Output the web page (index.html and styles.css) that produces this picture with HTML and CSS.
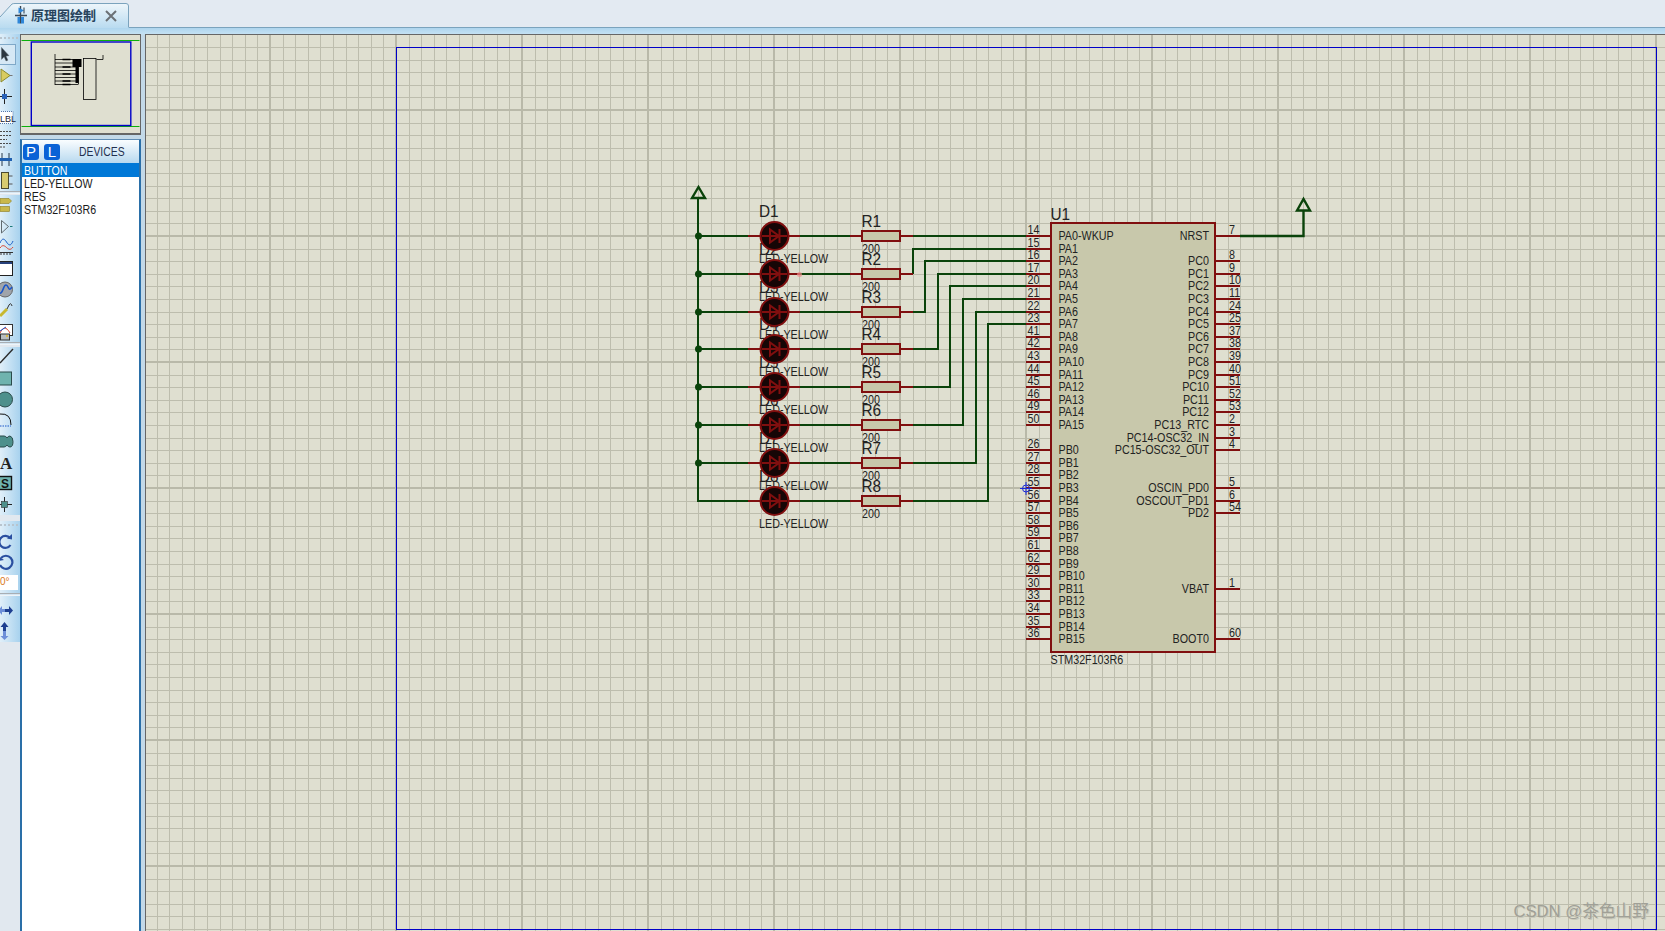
FILE: index.html
```html
<!DOCTYPE html>
<html lang="zh">
<head>
<meta charset="utf-8">
<title>原理图绘制</title>
<link rel="stylesheet" href="styles.css">
</head>
<body>
<header class="tabbar">
  <div class="tab">
    <svg class="tab-shape" viewBox="0 0 130 28" width="130" height="28">
      <defs><linearGradient id="tabg" x1="0" y1="0" x2="0" y2="1"><stop offset="0" stop-color="#eef6fb"/><stop offset="1" stop-color="#b9dbf0"/></linearGradient></defs>
      <path d="M0 17 L12 4 Q13 3.500 15 3.500 L126 3.500 Q128.500 3.500 128.500 6 L128.500 28 L0 28 Z" fill="url(#tabg)"/>
      <path d="M0 17 L12 4 Q13 3.500 15 3.500 L126 3.500 Q128.500 3.500 128.500 6 L128.500 27" fill="none" stroke="#7ba3bd"/>
    </svg>
    <svg class="tab-icon" viewBox="0 0 14 18" width="14" height="18">
      <path d="M6.500 0V17.500M1 9.500H13" stroke="#3a4652" stroke-width="1.400" fill="none"/>
      <path d="M4.500 1.500L10 4.500L4.500 7.500Z" fill="#2f86d8"/><path d="M10 1.500V7.500" stroke="#26384a"/>
      <rect x="3.500" y="11" width="2.500" height="6.500" fill="#2f86d8"/><rect x="7" y="11" width="3" height="6.500" fill="#2f86d8"/>
    </svg>
    <span class="tab-title">原理图绘制</span>
    <svg class="tab-close" viewBox="0 0 12 12" width="12" height="12"><path d="M1 1L11 11M11 1L1 11" stroke="#6b7075" stroke-width="2"/></svg>
  </div>
</header>

<main class="workspace">
  <nav class="toolbar">
    <div class="toolgroup">
      <div class="grip"></div>
      <svg class="tool active" viewBox="0 0 20 21"><path d="M2 1L2 17L5.500 13.500L8 19L10.500 18L8 12.500L12 12Z" fill="#2b3640" stroke="#55606a" stroke-width=".6"/></svg>
      <svg class="tool" viewBox="0 0 20 21"><path d="M1 4L1 17L10 10.500Z" fill="#d8cc60" stroke="#8a8a30"/><path d="M10 10.500H12.500" stroke="#777"/></svg>
      <svg class="tool" viewBox="0 0 20 21"><path d="M4.500 3V18M0 10.500H12" stroke="#222" stroke-width="1"/><rect x="2" y="8" width="5" height="5" fill="#2a62b8"/></svg>
      <svg class="tool" viewBox="0 0 20 21"><rect x="-3" y="4.500" width="16" height="12" fill="#fff" stroke="#5577aa" stroke-dasharray="1 1"/><text class="lbl" x="0" y="14.500">LBL</text></svg>
      <svg class="tool" viewBox="0 0 20 21"><path d="M0 3.500H11M0 7.500H11M0 11.500H7M0 15.500H11M0 19H6" stroke="#4a4a4a" stroke-width="1" stroke-dasharray="2 1"/></svg>
      <svg class="tool" viewBox="0 0 20 21"><path d="M2 4V17M9 4V17" stroke="#26384a" stroke-width="1"/><path d="M0 10.500H12" stroke="#2060b0" stroke-width="3"/></svg>
      <svg class="tool" viewBox="0 0 20 21"><rect x="1.500" y="2.500" width="7" height="16" fill="#d8cc70" stroke="#4a4a30"/><path d="M9 6H12.500M9 14H12.500" stroke="#555"/></svg>
    </div>
    <div class="sep"></div>
    <div class="toolgroup after-one">
      <svg class="tool" viewBox="0 0 20 21"><path d="M0 3.500H9L11.500 6L9 8.500H0Z" fill="#c9b84a" stroke="#8a7a20" stroke-width=".6"/><rect x="0" y="11.500" width="9.500" height="5" fill="#c9b84a" stroke="#8a7a20" stroke-width=".6"/></svg>
      <svg class="tool" viewBox="0 0 20 21"><path d="M1.500 4.500V17L8.500 10.500Z" fill="none" stroke="#606a70"/><path d="M10 10.500H12.500" stroke="#1a7a7a"/></svg>
      <svg class="tool" viewBox="0 0 20 21"><path d="M0 6C2 1 4 1 6.500 5S11 9 13 4" fill="none" stroke="#1a5fc8"/><path d="M0 11C2 8 4 8 6.500 10.500S11 13 13 10" fill="none" stroke="#d8402a"/><path d="M0 15.500H13M1 15.500V18M4 15.500V18M7 15.500V18M10 15.500V18" stroke="#333"/></svg>
      <svg class="tool" viewBox="0 0 20 21"><rect x="-2" y="3.500" width="14.500" height="14" fill="#fff" stroke="#222" stroke-width="1"/><rect x="-1" y="4" width="13" height="2" fill="#26407a"/></svg>
      <svg class="tool" viewBox="0 0 20 21"><circle cx="5" cy="10.500" r="7.500" fill="#a0a4aa" stroke="#666"/><path d="M-1 14C3 16 3 6 6 6S8 14 12 8" fill="none" stroke="#1a56c8" stroke-width="1.600"/></svg>
      <svg class="tool" viewBox="0 0 20 21"><path d="M0 16L7 9" stroke="#c8b830" stroke-width="3"/><path d="M7 9L9 5Q11 2 12 6" fill="none" stroke="#333"/></svg>
      <svg class="tool" viewBox="0 0 20 21"><rect x="-2" y="3.500" width="14.500" height="11" fill="#fff" stroke="#333"/><path d="M0 12C3 6 6 5 10 12" fill="none" stroke="#d8402a"/><path d="M0 10L6 6" stroke="#1a56c8"/><rect x="0.500" y="13" width="9" height="6" fill="#b8bcc0" stroke="#333"/><circle cx="7" cy="15" r="1" fill="#e8b820"/></svg>
    </div>
    <div class="sep"></div>
    <div class="toolgroup after-two">
      <svg class="tool" viewBox="0 0 20 21"><path d="M0 16L13 2" stroke="#2a2a2a" stroke-width="1.400"/></svg>
      <svg class="tool" viewBox="0 0 20 21"><rect x="-2" y="4" width="13.500" height="13" fill="#6fb3ae" stroke="#2a4a4a"/></svg>
      <svg class="tool" viewBox="0 0 20 21"><circle cx="5" cy="10.500" r="7.500" fill="#4e908c" stroke="#2a4a4a"/></svg>
      <svg class="tool" viewBox="0 0 20 21"><path d="M0 4Q11 3 11 15" fill="none" stroke="#111"/><path d="M0 16H11" stroke="#1a56c8" stroke-dasharray="1.500 1"/></svg>
      <svg class="tool" viewBox="0 0 20 21"><path d="M-1 5H4Q6 5 7 7Q8 5 10 5Q13 6 13 10.500Q13 16 10 16Q8 16 7 14Q6 16 4 16H-1Z" fill="#4e908c" stroke="#2a4a4a"/></svg>
      <svg class="tool" viewBox="0 0 20 21"><text class="big-a" x="0" y="17">A</text></svg>
      <svg class="tool" viewBox="0 0 20 21"><rect x="-2" y="3.500" width="13.500" height="13" fill="#6fb3ae" stroke="#111" stroke-width="1.400"/><text class="big-s" x="1" y="15">S</text></svg>
      <svg class="tool" viewBox="0 0 20 21"><path d="M4.500 3V18M0 10.500H12" stroke="#222"/><rect x="1.500" y="7.500" width="6" height="6" fill="#4e908c" stroke="#333" stroke-width=".6"/></svg>
    </div>
    <div class="toolgap"></div>
    <div class="toolgroup">
      <div class="grip"></div>
      <svg class="tool" viewBox="0 0 20 21"><path d="M10 7A6 6 0 1 0 10.500 14" fill="none" stroke="#2a4fa0" stroke-width="2.200"/><path d="M7 7.500L12 8.500L12 3Z" fill="#2a4fa0"/></svg>
      <svg class="tool" viewBox="0 0 20 21"><path d="M1 6A6.500 6.500 0 1 1 0 13" fill="none" stroke="#2a4fa0" stroke-width="2.200"/><path d="M-2 4L-1 9L4 8Z" fill="#2a4fa0"/></svg>
      <div class="angle"><span class="angle-val">0°</span></div>
      <div class="sep"></div>
      <svg class="tool flip-first" viewBox="0 0 20 21"><path d="M5 9H9V6L13 10.500L9 15V12H5Z" fill="#1e3f90"/><path d="M5 9H2V6L-2 10.500L2 15V12H5Z" fill="#6d8fd8"/></svg>
      <svg class="tool" viewBox="0 0 20 21"><path d="M3 10V6H0.500L4.500 1L8.500 6H6V10Z" fill="#1e3f90"/><path d="M3 10V15H0.500L4.500 19L8.500 15H6V10Z" fill="#6d8fd8"/></svg>
    </div>
  </nav>

  <aside class="sidebar">
    <section class="overview">
      <svg class="overview-svg" viewBox="21 36 118 98">
        <path class="ov-green" d="M21 41.500H139M21 127.500H139"/>
        <rect class="ov-sheet" x="30.800" y="43" width="99.500" height="83.500"/>
        <path class="ov-ink" d="M54.500 55V86M54.500 60.500H78M54.500 64H78M54.500 68H76M54.500 71.500H76M54.500 75H78M54.500 78.500H78M54.500 82H78M54.500 85.500H78M78 60V85"/>
        <path class="ov-thick" d="M62 60.500H70M62 68H70M62 75H70M62 82H70M62 85.500H70"/>
        <path class="ov-blob" d="M72 60H81V68H78V84H75V68H72Z"/>
        <rect class="ov-ink" x="83" y="59.500" width="12.500" height="41"/>
        <path class="ov-ink" d="M96 60.500H102.500V56"/>
      </svg>
    </section>
    <section class="devices">
      <div class="devices-head">
        <span class="pl-btn">P</span>
        <span class="pl-btn">L</span>
        <span class="devices-title">DEVICES</span>
      </div>
      <ul class="device-list">
        <li class="device selected"><span>BUTTON</span></li>
        <li class="device"><span>LED-YELLOW</span></li>
        <li class="device"><span>RES</span></li>
        <li class="device"><span>STM32F103R6</span></li>
      </ul>
    </section>
  </aside>

  <section class="canvas">
    <svg id="sheet" class="schematic" viewBox="145 34 1520 897" width="1520" height="897"></svg>
    <div class="watermark">CSDN @茶色山野</div>
  </section>
</main>
<script src="script.js"></script>
</body>
</html>
```

FILE: styles.css
```css
* { box-sizing: border-box; }
html, body { margin: 0; height: 100%; overflow: hidden; }
body {
  display: flex;
  flex-direction: column;
  width: 1665px;
  height: 931px;
  background: #e1e8ef;
  font-family: "Liberation Sans", Arial, sans-serif;
}

/* Tab strip */
.tabbar {
  height: 28px;
  flex: none;
  background: #e3eaf2;
  border-bottom: 1px solid #7ba3bd;
  display: flex;
}
.tab { position: relative; width: 130px; height: 28px; }
.tab-shape { position: absolute; left: 0; top: 0; }
.tab-icon { position: absolute; left: 14px; top: 6px; }
.tab-title {
  position: absolute;
  left: 31px;
  top: 6px;
  font: 700 13px/17px "Noto Sans CJK SC", sans-serif;
  color: #27435c;
}
.tab-close { position: absolute; left: 105px; top: 10px; }

/* Main area */
.workspace {
  flex: 1;
  min-height: 0;
  display: flex;
  padding-top: 6px;
  background: linear-gradient(#aed5ee 0, #c4e1f3 6px, #c3d9e8 7px);
}

/* Left tool strip */
.toolbar {
  width: 20px;
  flex: none;
  display: flex;
  flex-direction: column;
  background: #e1e8ef;
  overflow: hidden;
}
.toolgroup {
  display: flex;
  flex-direction: column;
  flex: none;
  background: linear-gradient(90deg, #e0eff9, #a8d2ee);
}
.after-one { margin-top: 1px; }
.after-two { margin-top: 2px; }
.grip {
  height: 10px;
  margin-right: 2px;
  background: repeating-linear-gradient(90deg, #b8c4ce 0 2px, transparent 2px 4px) 0 3px / 100% 2px no-repeat;
}
.tool { display: block; width: 20px; height: 21px; flex: none; overflow: hidden; }
.tool.active { background: #d6e8f5; border: 1px solid #7fa8c8; border-left: 0; width: 16px; }
.sep {
  height: 3px;
  flex: none;
  border-top: 1px solid #a8aeb4;
  border-bottom: 1px solid #eef4f9;
  background: #d5e6f2;
}
.toolgap { height: 6px; flex: none; }
.angle {
  position: relative;
  height: 15px;
  width: 18px;
  margin: 2px 0 3px;
  flex: none;
  overflow: hidden;
  background: #fff;
}
.angle-val { position: absolute; left: 0; top: 0; font-size: 10px; line-height: 14px; color: #d87a20; }
.flip-first { margin-top: 4px; }
.lbl { font: 9px "Liberation Sans", sans-serif; fill: #223; }
.big-a { font: 700 17px "Liberation Serif", serif; fill: #222; }
.big-s { font: 700 12px "Liberation Sans", sans-serif; fill: #111; }

/* Side panel */
.sidebar {
  width: 121px;
  flex: none;
  display: flex;
  flex-direction: column;
  gap: 4px;
}
.overview {
  height: 101px;
  flex: none;
  border: 1px solid #666;
  border-bottom-width: 2px;
  background: #dfdfd0;
}
.overview-svg { display: block; width: 119px; height: 98px; }
.ov-green { stroke: #0ab00a; stroke-width: 1; fill: none; }
.ov-sheet { stroke: #0000c8; stroke-width: 1.400; fill: none; }
.ov-ink { stroke: #000; stroke-width: .8; fill: none; }
.ov-thick { stroke: #000; stroke-width: 1.600; fill: none; }
.ov-blob { fill: #000; }
.devices {
  flex: 1;
  display: flex;
  flex-direction: column;
  border: 2px solid #2a6fa8;
  border-top: 1px solid #5f8db5;
  border-bottom: 0;
  background: #fff;
}
.devices-head {
  height: 23px;
  flex: none;
  display: flex;
  align-items: center;
  gap: 5px;
  padding-left: 1px;
  background: linear-gradient(#fafdff, #b8d9ef);
}
.pl-btn {
  width: 16px;
  height: 16px;
  border-radius: 3px;
  background: #0a62d6;
  color: #fff;
  font-size: 15px;
  line-height: 16px;
  text-align: center;
}
.devices-title {
  margin-left: 14px;
  font-size: 12.500px;
  color: #1f3050;
  transform: scaleX(.83);
  transform-origin: left center;
}
.device-list { list-style: none; margin: 0; padding: 0; }
.device {
  height: 13px;
  padding-left: 2px;
  font-size: 12.500px;
  line-height: 13px;
  color: #1a1a1a;
  white-space: nowrap;
}
.device span {
  display: inline-block;
  position: relative;
  top: 1px;
  transform: scaleX(.85);
  transform-origin: left center;
}
.device.selected { height: 14px; line-height: 14px; background: #0078d7; color: #fff; }

/* Drawing canvas */
.canvas {
  position: relative;
  flex: 1;
  min-width: 0;
  margin-left: 4px;
  background: #dfdfd0;
  overflow: hidden;
}
.schematic { display: block; }
.grid-minor { stroke: #bdbdad; stroke-width: 1; }
.grid-major { stroke: #b9b9a9; stroke-width: 2; }
.frame { fill: none; stroke: #666; stroke-width: 2; }
.sheet-edge { fill: none; stroke: #0000c8; stroke-width: 1; }
.wire { fill: none; stroke: #0a430a; stroke-width: 2; }
.dot { fill: #0a430a; }
.power { fill: none; stroke: #0a430a; stroke-width: 2.400; }
.pin { stroke: #800f0f; stroke-width: 2; fill: none; }
.body { fill: #c8c8ab; stroke: #800f0f; stroke-width: 2; }
.led { fill: #160606; stroke: #800f0f; stroke-width: 2; }
.diode { fill: none; stroke: #800f0f; stroke-width: 2; }
.probe-dot { fill: #f08a8a; opacity: .7; }
.cursor { fill: none; stroke: #1a2ad8; stroke-width: 1; }
.label { font-family: "Liberation Sans", Arial, sans-serif; font-size: 12.500px; fill: #222; }
.label.ref { font-size: 16.500px; }
.watermark {
  position: absolute;
  right: 16px;
  bottom: 9px;
  font: 16.700px/20px "Liberation Sans", "Noto Sans CJK SC", sans-serif;
  color: #a0a097;
  text-shadow: 1px 1px 0 #c9c9ba;
  white-space: nowrap;
}
```

FILE: script.js
```javascript
(function () {
  var out = [];
  var X0 = 145, Y0 = 34, X1 = 1665, Y1 = 931;
  var STEP = 12.6;

  function line(cls, x1, y1, x2, y2) {
    out.push('<line class="' + cls + '" x1="' + x1 + '" y1="' + y1 + '" x2="' + x2 + '" y2="' + y2 + '"/>');
  }
  function path(cls, d) { out.push('<path class="' + cls + '" d="' + d + '"/>'); }
  function label(x, y, s, opt) {
    opt = opt || {};
    var sx = opt.ref ? 0.93 : 0.86;
    out.push('<text class="label' + (opt.ref ? ' ref' : '') + '" transform="translate(' + x + ' ' + y + ') scale(' + sx + ' 1)"' +
      (opt.end ? ' text-anchor="end"' : '') + '>' + s + '</text>');
  }

  // Grid: minor every 12.6px, major every tenth line
  var k, v, minor = [], major = [];
  for (k = -10; k <= 120; k++) {
    v = 270 + STEP * k;
    if (v < X0 || v > X1) continue;
    if (k % 10 === 0) major.push(['x', Math.round(v)]); else minor.push(['x', Math.round(v) + 0.5]);
  }
  for (k = -10; k <= 70; k++) {
    v = 110 + STEP * k;
    if (v < Y0 || v > Y1) continue;
    if (k % 10 === 0) major.push(['y', Math.round(v)]); else minor.push(['y', Math.round(v) + 0.5]);
  }
  minor.forEach(function (m) {
    if (m[0] === 'x') line('grid-minor', m[1], Y0, m[1], Y1); else line('grid-minor', X0, m[1], X1, m[1]);
  });
  major.forEach(function (m) {
    if (m[0] === 'x') line('grid-major', m[1], Y0, m[1], Y1); else line('grid-major', X0, m[1], X1, m[1]);
  });

  // Sheet edge and canvas frame
  out.push('<rect class="sheet-edge" x="396.500" y="47.500" width="1260" height="882"/>');
  path('frame', 'M145 931V34H1665');

  // LED / resistor rows
  var rows = [236, 274, 312, 349, 387, 425, 463, 501];
  var exits = [
    [1026, 236], [913, 249], [925, 261], [938, 274],
    [950, 286], [963, 299], [976, 312], [988, 324]
  ];

  // Labels first: the LED bodies cover them
  rows.forEach(function (y, i) {
    label(759, y - 19.5, 'D' + (i + 1), { ref: true });
    label(759, y + 26.5, 'LED-YELLOW');
  });

  // Wires
  path('wire', 'M698 198V501H748');
  rows.forEach(function (y, i) {
    if (i < 7) line('wire', 698, y, 748, y);
    line('wire', 800, y, 850, y);
    var e = exits[i];
    if (i === 0) path('wire', 'M913 ' + y + 'H1026');
    else path('wire', 'M913 ' + y + 'H' + e[0] + 'V' + e[1] + 'H1026');
    if (i < 7) out.push('<circle class="dot" cx="698.500" cy="' + y + '" r="3.500"/>');
  });

  // Power terminals
  path('power', 'M692 198L698.500 187L705 198Z');
  path('power', 'M1297 210.500L1303.500 199L1310 210.500H1297ZM1303.500 210V236H1240');

  // Components
  rows.forEach(function (y, i) {
    path('pin', 'M748 ' + y + 'H762M786 ' + y + 'H800');
    out.push('<circle class="led" cx="774.500" cy="' + y + '" r="14"/>');
    path('diode', 'M762 ' + y + 'H787M770 ' + (y - 6.5) + 'V' + (y + 6.5) + 'L779 ' + y + 'ZM779.500 ' + (y - 7) + 'V' + (y + 7));
    path('pin', 'M850 ' + y + 'H862M900 ' + y + 'H913');
    out.push('<rect class="body" x="862" y="' + (y - 5) + '" width="38" height="10"/>');
    label(861.5, y - 9, 'R' + (i + 1), { ref: true });
    label(862, y + 16.5, '200');
  });

  // Microcontroller
  out.push('<rect class="body" x="1051" y="223" width="164" height="429"/>');
  label(1050.5, 219.5, 'U1', { ref: true });
  label(1050.5, 664, 'STM32F103R6');

  var left = [
    [0, '14', 'PA0-WKUP'], [1, '15', 'PA1'], [2, '16', 'PA2'], [3, '17', 'PA3'], [4, '20', 'PA4'],
    [5, '21', 'PA5'], [6, '22', 'PA6'], [7, '23', 'PA7'], [8, '41', 'PA8'], [9, '42', 'PA9'],
    [10, '43', 'PA10'], [11, '44', 'PA11'], [12, '45', 'PA12'], [13, '46', 'PA13'], [14, '49', 'PA14'],
    [15, '50', 'PA15'], [17, '26', 'PB0'], [18, '27', 'PB1'], [19, '28', 'PB2'], [20, '55', 'PB3'],
    [21, '56', 'PB4'], [22, '57', 'PB5'], [23, '58', 'PB6'], [24, '59', 'PB7'], [25, '61', 'PB8'],
    [26, '62', 'PB9'], [27, '29', 'PB10'], [28, '30', 'PB11'], [29, '33', 'PB12'], [30, '34', 'PB13'],
    [31, '35', 'PB14'], [32, '36', 'PB15']
  ];
  var right = [
    [0, '7', 'NRST'], [2, '8', 'PC0'], [3, '9', 'PC1'], [4, '10', 'PC2'], [5, '11', 'PC3'],
    [6, '24', 'PC4'], [7, '25', 'PC5'], [8, '37', 'PC6'], [9, '38', 'PC7'], [10, '39', 'PC8'],
    [11, '40', 'PC9'], [12, '51', 'PC10'], [13, '52', 'PC11'], [14, '53', 'PC12'], [15, '2', 'PC13_RTC'],
    [16, '3', 'PC14-OSC32_IN'], [17, '4', 'PC15-OSC32_OUT'], [20, '5', 'OSCIN_PD0'], [21, '6', 'OSCOUT_PD1'],
    [22, '54', 'PD2'], [28, '1', 'VBAT'], [32, '60', 'BOOT0']
  ];
  left.forEach(function (p) {
    var y = Math.round(236 + STEP * p[0]);
    path('pin', 'M1026 ' + y + 'H1051');
    label(1027.5, y - 2, p[1]);
    label(1058.5, y + 4, p[2]);
  });
  right.forEach(function (p) {
    var y = Math.round(236 + STEP * p[0]);
    path('pin', 'M1215 ' + y + 'H1240');
    label(1229, y - 2, p[1]);
    label(1209, y + 4, p[2], { end: true });
  });

  // Cursor and the faint probe mark
  out.push('<circle class="probe-dot" cx="799.500" cy="274.500" r="2.500"/>');
  out.push('<circle class="cursor" cx="1026" cy="488.500" r="3.500"/>');
  path('cursor', 'M1020 488.500H1032M1026 482V495');

  document.getElementById('sheet').innerHTML = out.join('');
})();
```
